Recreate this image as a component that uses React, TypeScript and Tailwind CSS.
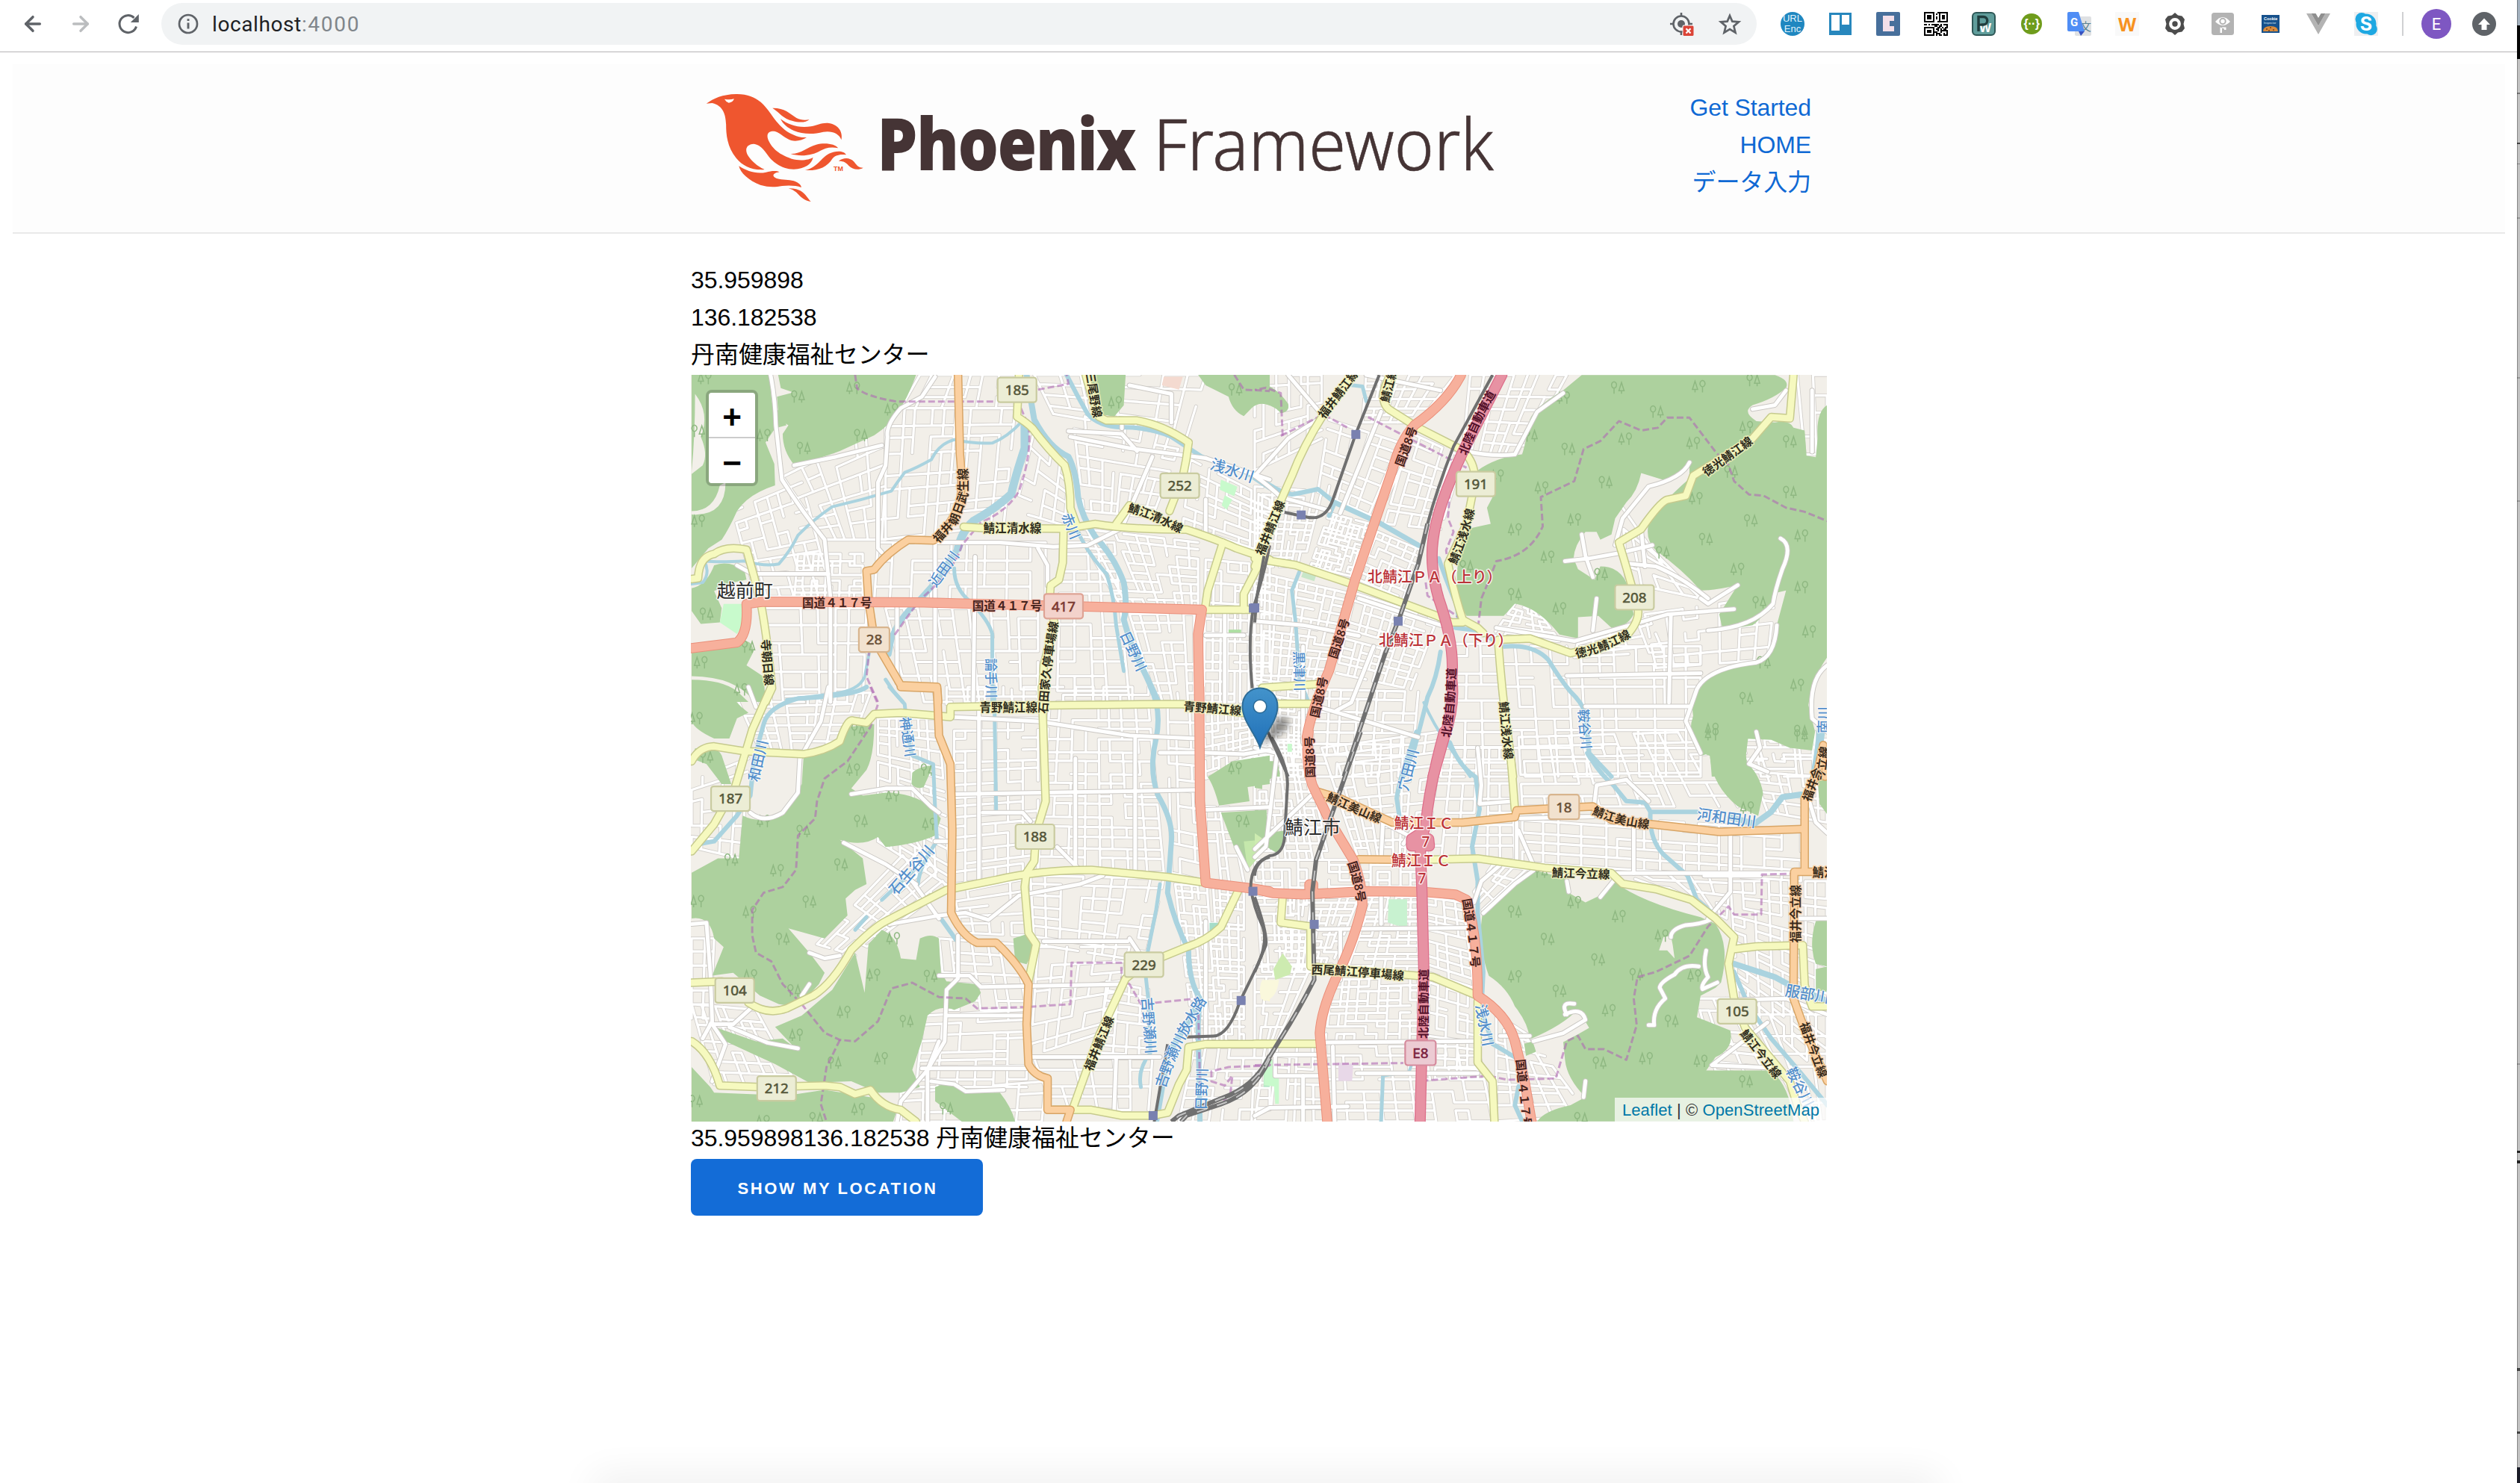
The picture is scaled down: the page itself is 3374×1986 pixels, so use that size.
import React from "react";
import { ArrowLeft, ArrowRight } from "lucide-react";

/* ---------- Map data: four sheets, each with its own local grid ---------- */

type Pt = [number, number];
type Label = { t: string; k: string; p: Pt[]; s?: number };
type Sheet = {
  ox: number; oy: number; sx: number; sy: number;
  grids: number[][];
  forest: string[];
  park: [string, string][];
  water: [string, number][];
  minor: string[];
  yellow: string[];
  orange: string[];
  trunk: string[];
  motorway: string[];
  rail: string[];
  mainRail: string[];
  admin: string[];
  stations: Pt[];
  trees: Pt[];
  labels: Label[];
  shields: { t: string; x: number; y: number; k: string }[];
};

const NW: Sheet = {
  ox: 900, oy: 340, sx: 0.510204, sy: 0.382653,
  grids: [
    [290, 780, 560, 600, 560, 1000, 400, 1000, 6, 6], [570, 540, 900, 540, 870, 950, 550, 1000, 9, 8],
    [160, 900, 340, 800, 420, 1200, 220, 1200, 6, 8], [540, 1010, 980, 1010, 980, 1220, 530, 1220, 9, 4],
    [240, 1240, 510, 1240, 500, 1568, 260, 1568, 6, 6], [560, 1240, 960, 1240, 960, 1568, 620, 1568, 9, 7],
    [1050, 560, 1340, 640, 1260, 920, 1080, 900, 8, 7], [1060, 960, 1380, 1010, 1380, 1240, 1180, 1240, 10, 8],
    [1200, 1260, 1370, 1260, 1370, 1568, 1270, 1568, 5, 9], [1360, 720, 1568, 860, 1568, 1050, 1340, 950, 8, 7],
    [1400, 1070, 1568, 1090, 1568, 1568, 1395, 1568, 9, 14], [1020, 1010, 1160, 1010, 1200, 1568, 1010, 1568, 4, 12],
    [650, 423, 900, 423, 900, 540, 600, 540, 6, 3], [950, 423, 1400, 423, 1350, 640, 1000, 560, 8, 4],
    [330, 1050, 500, 1050, 500, 1210, 320, 1210, 9, 7], [950, 620, 1040, 760, 1030, 950, 900, 900, 4, 5],
  ],
  forest: [
    "M51,423 L255,423 L262,520 L285,560 L300,600 L270,610 L245,660 L268,735 L270,810 Q200,840 170,900 Q150,960 130,1000 L95,1030 L51,1100Z",
    "M278,423 L640,423 Q620,500 590,560 Q570,600 530,635 L440,690 Q380,720 320,738 Q290,690 290,630 L305,600 L280,580 L275,500 L318,485 L285,470Z",
    "M1085,423 L1190,423 L1185,530 L1160,570 L1120,560Z",
    "M1380,423 L1568,423 L1568,530 Q1540,515 1520,540 L1500,568 Q1470,550 1460,500 L1400,460Z",
    "M51,1170 Q90,1160 110,1090 Q150,1070 190,1110 L195,1140 L160,1150 L110,1180 L130,1240 L125,1290 L75,1295 L51,1250Z",
    "M51,1390 L160,1375 Q205,1330 214,1390 L195,1440 L240,1480 L245,1568 L51,1568Z",
  ],
  park: [
    ["M135,1225 L185,1225 L190,1290 L170,1330 L125,1290Z", "#c8facc"],
    ["M1440,790 L1483,815 L1475,848 L1437,825Z", "#c8facc"],
    ["M1450,845 L1470,860 L1455,895 L1442,880Z", "#c8facc"],
    ["M1460,1315 L1493,1315 L1493,1328 L1460,1328Z", "#aedfa3"],
    ["M1290,430 L1340,430 L1330,475 L1285,460Z", "#f4dad0"],
    ["M51,1490 Q130,1490 170,1530 L200,1568 L215,1568 Q170,1480 51,1478Z", "#f2efe9"],
    ["M60,490 Q100,560 75,640 Q95,700 80,740 L51,770 L51,760 Q60,640 60,490Z", "#f2efe9"],
    ["M51,900 Q110,900 125,810 L140,800 Q140,920 51,912Z", "#f2efe9"],
  ],
  water: [
    ["M915,590 Q880,640 840,662 Q790,665 740,650 Q700,665 680,720 Q640,750 610,765 Q590,800 575,830 Q500,860 420,885 Q370,930 330,985 Q310,1040 280,1085 Q240,1095 190,1075 Q120,1080 85,1075 Q100,1120 80,1150 L51,1155", 4],
    ["M925,590 L925,680 Q900,780 890,840 Q850,890 790,935 Q760,970 750,1030", 11],
    ["M750,1030 L690,1150 L650,1210 Q590,1280 575,1350 L568,1400", 8],
    ["M518,1390 L505,1480 Q490,1530 420,1540 L300,1560", 4],
    ["M560,1490 L580,1530 L605,1568", 5],
    ["M930,423 L950,580 Q990,680 1040,710 Q1060,760 1065,850 Q1075,920 1110,990 Q1160,1060 1185,1150 Q1195,1230 1185,1280 L1205,1370 L1245,1480 L1275,1568", 8],
    ["M1060,960 Q1090,1050 1140,1120 Q1160,1200 1165,1300 L1185,1460", 5],
    ["M1035,423 Q1060,490 1090,560 Q1120,605 1180,607 Q1250,605 1310,640 L1390,710 L1500,760 L1568,820", 6],
    ["M740,1100 Q740,1170 780,1215 Q830,1280 840,1330 L840,1568", 5],
  ],
  minor: [
    "M258,423 Q270,500 272,600 L288,790 Q340,900 400,1000 L415,1200 L415,1568",
    "M690,430 L655,500 L600,540 Q560,600 565,640 L560,740 L540,800 L540,1030 L550,1045",
    "M700,1010 L860,1010 L1000,1025 L1090,1020 L1180,960 L1260,710",
    "M1045,640 L1200,680 L1400,715", "M1040,620 L1180,630 L1220,690", "M1180,583 L1180,610",
    "M690,1010 L690,1500", "M795,1060 L790,1568", "M1450,1250 V1568", "M1400,1335 H1500",
    "M960,1030 L985,1090 L985,1160", "M320,740 L430,710 L550,670", "M1200,460 L1310,490 L1310,590",
    "M170,1090 L210,1120 L410,1120", "M1400,715 L1568,790", "M1400,860 L1400,980", "M590,1230 L590,1500",
  ],
  yellow: [
    "M910,423 L905,570 Q930,590 945,610 Q990,690 1030,740 Q1045,800 1045,890 L1060,945",
    "M765,955 L820,960 L1030,962 L1110,945 Q1200,965 1350,965 Q1430,1000 1480,1030 L1568,1070",
    "M1027,962 L1025,1080 L1015,1140 L993,1160 L990,1220 L1003,1290 L975,1440 L970,1568",
    "M1165,945 L1200,880 L1230,905 Q1280,920 1320,960",
    "M1355,660 Q1350,720 1340,780 L1305,900",
    "M1085,423 Q1100,500 1120,570 L1140,583 L1220,583 Q1290,600 1355,660",
    "M51,1138 L68,1135 Q70,1060 110,1050 Q140,1020 195,1035 L215,1130 L235,1240 Q250,1350 262,1520 L245,1568",
    "M1445,1010 L1405,1180 L1398,1245 L1525,1245", "M1550,1060 L1500,1190 L1500,1245",
  ],
  orange: ["M750,423 L755,700 Q765,840 750,890 Q720,970 685,1003 L620,1000 Q560,1050 530,1105 L510,1110 L515,1210 L525,1300 L530,1350 L600,1510 L695,1515 L698,1568"],
  trunk: ["M51,1380 L170,1360 Q200,1330 195,1225 L240,1217 L660,1220 L1100,1235 L1390,1245 L1380,1330 L1383,1568"],
  motorway: [],
  rail: ["M1568,1020 Q1555,1110 1525,1240 Q1510,1350 1522,1520"],
  mainRail: [],
  admin: [
    "M480,423 L485,470 Q510,500 590,517 L850,517", "M960,475 L1040,455 L1035,423",
    "M915,540 L935,600 Q945,700 910,830 Q880,900 810,940 L760,1020 Q740,1110 650,1210 L580,1340",
    "M520,1350 L510,1480 L540,1568", "M1475,423 L1500,475 L1568,480",
  ],
  stations: [[1525, 1240]],
  trees: [[85, 435], [330, 500], [475, 470], [68, 620], [240, 635], [345, 680], [575, 545], [495, 635], [68, 935], [90, 1260], [75, 1430], [1478, 475], [1162, 520], [200, 1375], [180, 1525]],
  labels: [
    { t: "福井朝日武生線", k: "roadO", p: [[685, 1012], [740, 930], [762, 850], [762, 740]] },
    { t: "鯖江清水線", k: "road", p: [[800, 960], [985, 960]] },
    { t: "鯖江清水線", k: "road", p: [[1190, 885], [1265, 910], [1345, 970]] },
    { t: "国道４１７号", k: "roadT", p: [[320, 1222], [545, 1222]] },
    { t: "国道４１７号", k: "roadT", p: [[768, 1232], [990, 1232]] },
    { t: "石田家久停車場線", k: "road", p: [[972, 1620], [980, 1440], [1004, 1275]] },
    { t: "寺朝日線", k: "road", p: [[244, 1335], [256, 1525]] },
    { t: "三尾野線", k: "road", p: [[1096, 410], [1117, 575]] },
    { t: "越前町", k: "city", s: 25, p: [[98, 1178], [283, 1178]] },
    { t: "近田川", k: "river", s: 18, p: [[670, 1180], [755, 1025]] },
    { t: "赤川", k: "river", s: 18, p: [[1028, 890], [1065, 1015]] },
    { t: "浅水川", k: "river", s: 20, p: [[1395, 725], [1545, 790]] },
    { t: "日野川", k: "river", s: 19, p: [[1180, 1305], [1240, 1475]] },
    { t: "論手川", k: "river", s: 18, p: [[836, 1390], [838, 1580]] },
  ],
  shields: [
    { t: "185", x: 905, y: 476, k: "y" }, { t: "252", x: 1332, y: 811, k: "y" },
    { t: "417", x: 1027, y: 1233, k: "t" }, { t: "28", x: 530, y: 1350, k: "o" },
  ],
};

const NE: Sheet = {
  ox: 1680, oy: 480, sx: 0.497449, sy: 0.357143,
  grids: [
    [0, 62, 180, 62, 180, 300, 0, 420, 6, 7], [200, 230, 420, 330, 330, 600, 170, 500, 6, 7],
    [420, 280, 560, 370, 500, 640, 350, 620, 5, 8], [200, 580, 310, 620, 270, 820, 150, 780, 9, 12],
    [330, 650, 450, 720, 400, 900, 280, 830, 6, 6], [0, 800, 250, 880, 180, 1220, 0, 1220, 9, 12],
    [270, 880, 490, 980, 420, 1240, 220, 1180, 8, 9], [160, 1240, 440, 1250, 420, 1568, 150, 1568, 7, 8],
    [530, 1070, 650, 1070, 680, 1568, 500, 1568, 3, 9], [660, 1080, 1200, 1080, 1200, 1568, 690, 1568, 12, 9],
    [700, 920, 770, 960, 820, 1060, 640, 1040, 6, 6], [1050, 960, 1400, 890, 1380, 1130, 1080, 1160, 7, 5],
    [580, 62, 840, 62, 720, 370, 560, 350, 7, 7], [990, 560, 1070, 720, 1200, 900, 1000, 840, 4, 4],
    [0, 1200, 140, 1230, 130, 1568, 20, 1568, 8, 14], [1300, 1430, 1540, 1430, 1540, 1568, 1320, 1568, 6, 4],
    [1460, 62, 1540, 62, 1540, 360, 1480, 360, 2, 4], [0, 480, 180, 500, 130, 780, 0, 780, 8, 10],
    [300, 62, 540, 62, 440, 240, 290, 240, 6, 6], [870, 1060, 1060, 970, 1100, 1100, 860, 1120, 5, 4],
  ],
  forest: [
    "M880,62 L1400,62 Q1440,80 1430,110 Q1400,150 1340,175 Q1310,200 1350,235 L1400,240 Q1440,230 1450,260 L1480,270 L1485,365 L1510,370 L1515,300 Q1510,200 1541,175 L1541,1120 Q1500,1200 1490,1300 L1508,1400 L1500,1470 L1440,1460 L1390,1430 L1310,1425 L1320,1470 L1330,1568 L1230,1568 L1225,1480 L1200,1490 Q1160,1420 1180,1340 Q1170,1260 1210,1200 L1260,1160 L1350,1130 Q1400,1100 1405,1000 L1430,870 L1400,880 Q1380,960 1340,1000 L1260,1020 L1250,960 L1300,850 Q1240,870 1200,870 Q1150,790 1080,720 Q1050,680 1060,620 Q1080,560 1170,450 L1170,390 Q1160,430 1110,460 L1040,430 Q1030,500 1000,540 L970,600 L960,660 L930,680 L920,650 L890,650 Q860,700 858,750 L870,790 L915,830 L930,780 Q980,780 1000,840 L1020,960 Q1000,1010 960,1010 L925,965 L870,970 L870,1050 L820,1035 Q760,930 700,920 L670,965 L570,965 Q540,900 545,840 Q540,760 570,640 L635,620 L625,560 L640,520 L600,420 Q650,370 720,360 Q735,280 740,230 Q755,180 830,120 Z",
    "M0,90 Q50,90 90,170 Q95,200 70,205 Q50,170 0,165Z",
    "M0,1525 L60,1510 L68,1568 L0,1568Z",
  ],
  park: [["M130,800 L165,815 L160,835 L125,820Z", "#c8e6c8"], ["M88,1445 L100,1445 L100,1475 L88,1475Z", "#c8facc"]],
  water: [
    ["M215,540 L340,620 L440,700", 7], ["M15,450 Q60,500 100,510 Q140,500 170,490 L215,540 L200,590", 6],
    ["M260,100 L290,105 L300,160", 5],
    ["M495,750 Q520,850 545,930 L550,1000", 6], ["M500,1100 Q490,1200 465,1270 Q455,1330 430,1460 L400,1568", 6],
    ["M455,1290 Q480,1370 520,1450 L580,1568", 4],
    ["M540,1010 L600,1020 L670,1080 Q750,1070 790,1130 Q820,1200 850,1250 Q880,1290 890,1330 L900,1480 L960,1568", 6],
    ["M120,800 L100,870 L110,990 L120,1200 L145,1290", 5], ["M1525,1380 L1510,1568", 11],
  ],
  minor: [
    "M0,440 L90,300 L180,220", "M0,440 Q40,480 70,520 L200,570", "M560,345 Q640,370 700,360 L760,200 L830,130",
    "M650,1010 L860,1060 L1110,960 L1290,940", "M1220,900 Q1150,820 1080,780 L1010,770",
    "M835,760 L900,750 L980,730 L1070,700", "M1120,960 L1115,1290", "M1200,900 L1220,920 L1300,850",
    "M1415,675 Q1450,700 1420,790 Q1400,870 1395,920 Q1340,1010 1220,1020",
    "M1541,1150 Q1490,1200 1500,1350 L1540,1400", "M0,985 L130,1000 L280,1040",
    "M1170,390 Q1150,450 1060,480 L990,600 L970,700", "M880,660 L890,740 L910,820", "M1405,1000 Q1400,1120 1350,1140 Q1220,1160 1190,1240 L1160,1360 L1200,1480",
    "M320,1080 L260,1290 L220,1320", "M840,1190 L1200,1180", "M890,1305 H1170", "M340,200 L230,580",
    "M90,62 L180,210", "M280,900 L500,1000", "M1340,190 L1400,175 L1430,120", "M130,1080 L130,1440",
    "M1500,120 L1500,350", "M180,1310 L440,1420", "M1040,640 L1050,780", "M300,62 L500,120", "M920,900 L910,1020",
  ],
  yellow: [
    "M265,62 L185,210 Q130,330 100,440 Q60,560 0,780",
    "M365,62 Q330,150 360,190 L440,260 L560,345 Q600,400 590,480 L570,620 L520,770 Q540,900 560,980 L600,1010 L615,1030",
    "M0,750 L110,775 L260,845 L490,965 L530,990 L560,990",
    "M655,1055 L740,1050 L850,1105 L900,1090 L1000,1040 Q1040,980 1030,930 Q1000,780 980,690 L1040,640 Q1090,540 1110,530 L1160,515 L1180,440 L1340,300 L1390,220 L1440,225 L1450,62",
    "M655,1060 Q665,1250 680,1400 L695,1568", "M20,1235 L180,1220", "M60,1295 H160",
  ],
  orange: ["M1541,1470 L1535,1568"],
  trunk: ["M555,62 Q520,160 430,250 Q390,310 370,420 L270,830 L200,1170 Q150,1330 140,1420 L150,1568"],
  motorway: ["M665,62 L560,350 Q490,560 480,680 Q470,780 495,900 Q540,1080 530,1200 Q540,1300 510,1420 L480,1568"],
  rail: ["M335,62 L270,290 L210,530 Q190,610 140,595 L80,577", "M25,740 L5,900 L0,990", "M35,1400 L90,1568", "M640,62 L535,330 Q490,490 465,620"],
  mainRail: ["M465,620 L440,770 L390,970 L350,1110 L240,1568"],
  admin: [
    "M75,290 L70,130 L30,110 L0,118", "M70,290 L185,210 L250,260", "M305,220 L430,310 L570,410",
    "M525,500 L520,600 L535,650 L515,720 L520,770",
    "M460,840 L465,890 L600,1020 L610,900 Q640,800 650,760 Q740,740 775,630 L770,520 L860,460 L885,340 L930,310 L980,235 L1040,270 L1085,260 L1110,222 L1170,222 L1240,350 L1275,400 L1290,460 L1330,510 L1370,515 L1430,560 L1480,575 L1541,610",
  ],
  stations: [[272, 285], [125, 587], [386, 985], [0, 935]],
  trees: [[977, 110], [1195, 105], [1342, 82], [830, 148], [1082, 200], [1323, 258], [743, 290], [997, 302], [844, 340], [1180, 318], [1440, 312], [652, 440], [944, 465], [772, 485], [1440, 502], [1187, 525], [1282, 425], [860, 605], [1335, 608], [700, 642], [1214, 678], [1471, 665], [1098, 728], [788, 745], [570, 780], [1299, 790], [700, 885], [1471, 858], [932, 810], [820, 938], [1358, 915], [1492, 1025], [1370, 1140], [1460, 1225], [1323, 1275], [1230, 1390], [1470, 1398]],
  labels: [
    { t: "福井鯖江線", k: "road", p: [[180, 215], [270, 50]] },
    { t: "福井鯖江線", k: "road", p: [[8, 750], [75, 520]] },
    { t: "鯖江線", k: "road", p: [[348, 170], [375, 30]] },
    { t: "国道8号", k: "roadT", p: [[385, 415], [430, 245]] },
    { t: "国道8号", k: "roadT", p: [[205, 1140], [248, 960]] },
    { t: "国道8号", k: "roadT", p: [[155, 1375], [190, 1165]] },
    { t: "国道8号", k: "roadT", p: [[150, 1590], [147, 1400]] },
    { t: "北陸自動車道", k: "motor", p: [[555, 375], [590, 240], [645, 110]] },
    { t: "北陸自動車道", k: "motor", p: [[512, 1440], [528, 1300], [530, 1140]] },
    { t: "鯖江浅水線", k: "road", p: [[525, 785], [560, 690], [583, 545]] },
    { t: "鯖江浅水線", k: "road", p: [[668, 1270], [685, 1520]] },
    { t: "徳光鯖江線", k: "road", p: [[1195, 445], [1350, 290]] },
    { t: "徳光鯖江線", k: "road", p: [[850, 1110], [930, 1095], [1020, 1020]] },
    { t: "北鯖江ＰＡ（上り）", k: "red", s: 20, p: [[274, 818], [694, 818]] },
    { t: "北鯖江ＰＡ（下り）", k: "red", s: 20, p: [[304, 1057], [724, 1057]] },
    { t: "黒津川", k: "river", s: 18, p: [[118, 1075], [122, 1270]] },
    { t: "鞍谷川", k: "river", s: 18, p: [[882, 1290], [895, 1490]] },
    { t: "南川", k: "river", s: 18, p: [[1530, 1450], [1530, 1260]] },
    { t: "今立線", k: "roadO", p: [[1518, 1600], [1535, 1440]] },
  ],
  shields: [{ t: "191", x: 595, y: 471, k: "y" }, { t: "208", x: 1022, y: 896, k: "y" }],
};

const SW: Sheet = {
  ox: 900, oy: 920, sx: 0.510204, sy: 0.382653,
  grids: [
    [170, 40, 520, 20, 460, 230, 230, 220, 8, 6], [540, 110, 700, 110, 730, 700, 540, 540, 6, 14],
    [740, 110, 960, 110, 960, 650, 740, 690, 6, 15], [990, 70, 1250, 70, 1290, 650, 960, 640, 8, 15],
    [1300, 70, 1380, 70, 1400, 680, 1310, 650, 3, 12], [1395, 70, 1568, 70, 1568, 240, 1400, 320, 9, 9],
    [740, 720, 930, 670, 930, 870, 760, 860, 5, 5], [940, 660, 1290, 670, 1240, 960, 950, 900, 8, 7],
    [1320, 690, 1500, 710, 1500, 1240, 1370, 1240, 9, 22], [960, 910, 1200, 910, 1150, 1200, 940, 1290, 6, 7],
    [660, 1150, 930, 1130, 930, 1400, 640, 1400, 6, 8], [950, 1300, 1260, 1300, 1250, 1480, 1000, 1480, 6, 4],
    [700, 880, 900, 900, 930, 1130, 720, 1130, 5, 6], [51, 880, 110, 880, 100, 1160, 51, 1160, 2, 6],
    [51, 1110, 220, 1130, 330, 1400, 110, 1390, 6, 7], [380, 900, 640, 540, 720, 700, 480, 940, 8, 6],
    [1370, 1260, 1568, 1260, 1568, 1521, 1330, 1521, 6, 7], [51, 330, 200, 250, 180, 600, 51, 560, 4, 6],
    [600, 1420, 980, 1380, 970, 1521, 600, 1521, 6, 3], [980, 0, 1250, 0, 1250, 60, 980, 60, 7, 2],
    [720, 0, 960, 0, 960, 60, 720, 60, 5, 2], [1400, 420, 1460, 420, 1500, 680, 1400, 680, 3, 6],
    [1140, 1030, 1250, 1060, 1250, 1290, 1120, 1280, 4, 7],
  ],
  forest: [
    "M51,0 L140,0 Q160,50 200,90 L170,110 L150,180 L110,180 Q60,150 51,120Z",
    "M60,215 Q120,205 130,240 L155,340 L130,340 L90,270 L51,250Z",
    "M530,130 Q530,240 510,290 L470,355 L500,380 L560,370 Q630,370 680,420 L705,460 L690,520 Q640,550 560,560 L540,525 Q500,560 440,535 L500,600 L510,690 L480,710 L455,740 L460,800 L400,880 L305,845 L360,930 L400,1000 L385,1040 L330,1120 L280,1110 L230,1080 L160,1000 L105,1010 L135,910 L110,880 Q100,800 51,810 L51,650 L120,600 L175,600 L185,450 Q230,480 290,450 L340,340 L345,240 Q440,200 460,140Z",
    "M550,850 Q590,870 600,950 L640,955 L650,880 Q680,860 700,880 L705,1000 L720,1030 L800,1040 L810,1070 L795,1100 L740,1130 Q700,1110 670,1150 L655,1240 L630,1340 L650,1400 L600,1420 L540,1420 L470,1380 L360,1385 L270,1320 L140,1240 L110,1190 L220,1240 L290,1230 L320,1260 L270,1190 L340,1150 L420,1060 L480,930 L505,1070 L515,900Z",
    "M51,1330 L100,1400 L110,1420 L300,1430 L400,1410 L540,1440 L590,1480 L580,1521 L51,1521Z",
    "M690,1400 Q740,1370 790,1420 L860,1420 Q890,1470 900,1521 L760,1521 L690,1450Z",
    "M895,880 L930,865 L950,920 L930,970 L900,960Z",
    "M630,300 Q650,275 685,275 L660,350 Q640,360 628,340Z",
    "M1470,260 L1568,240 L1568,340 L1510,350 L1515,400 L1435,415 Q1420,340 1405,315Z",
    "M1440,440 L1560,430 L1560,560 L1510,640 L1480,580Z",
  ],
  park: [
    ["M1500,540 L1545,535 L1535,600 L1510,640Z", "#c5e8ac"], ["M1410,825 L1435,825 L1430,850 L1410,855Z", "#a5dcc8"],
    ["M1545,1035 L1568,1030 L1568,1100 L1545,1090Z", "#fdf9d2"], ["M1552,1330 L1568,1330 L1568,1400 L1552,1400Z", "#b5e8c8"],
  ],
  water: [
    ["M510,0 Q480,30 330,40 Q250,70 240,130 L215,250 L205,380 L170,450 L110,540 L75,548", 6],
    ["M570,0 L610,60 L620,180 L630,240 L685,270 L690,430 L695,540 Q650,620 645,690", 5],
    ["M635,640 L550,745", 5], ["M510,805 L480,850", 5], ["M705,810 L745,885", 6], ["M845,0 L850,430", 5],
    ["M1255,0 Q1285,80 1270,180 Q1250,290 1275,380 Q1315,470 1310,540 L1300,720 Q1320,830 1355,920 Q1355,1030 1385,1090 L1380,1180 L1385,1521", 7],
    ["M1280,690 L1270,780 L1240,980 L1250,1100 L1255,1280 Q1220,1340 1230,1400", 5],
    ["M1385,1100 L1300,1290 L1270,1521", 8],
  ],
  minor: [
    "M740,375 L1380,360", "M740,105 L960,120 L1200,170 L1375,180", "M805,70 V690", "M815,440 L920,440 L940,470",
    "M1215,180 V660", "M1058,250 V640", "M1010,560 L1070,640", "M570,830 L700,800 L770,790 L830,815 L910,730 L1070,690 L1130,660",
    "M630,680 L700,810", "M700,1010 L780,1010 L810,1050 L1180,1040", "M720,1150 H935", "M945,1295 H1280", "M655,1335 H930",
    "M750,870 L750,1020 L720,1060 L715,1240 L670,1340 L600,1450 L590,1521", "M51,830 L90,825 L100,1000 L105,1170 L80,1230",
    "M100,1180 L160,1180 L210,1120", "M105,1180 L140,1250 L105,1380", "M975,890 L1195,890", "M1400,430 L1568,420",
    "M470,375 L560,355 L630,355 L680,420 L700,440", "M205,440 Q240,480 290,440 L330,370 L335,250 L390,120 L410,0",
    "M200,0 L220,70", "M680,1380 L740,1390 L770,1415 L870,1410", "M360,930 L400,950 L440,940", "M1200,880 L1240,960",
    "M1280,230 L1400,230 L1500,235 L1568,220", "M670,1521 L670,1340 L700,1240", "M450,545 L560,620 L640,690", "M1165,1300 L1160,1480", "M360,1040 L340,1080",
    "M690,540 H725", "M1480,560 L1510,640", "M1400,820 V1230", "M150,1190 L250,1245 L330,1265",
  ],
  yellow: [
    "M51,260 Q70,210 110,208 L190,225 L345,235 Q400,225 440,190 Q460,110 475,118 L510,125 L530,95 L600,90 L690,100 L730,105 L730,70 L960,65 L1290,60 L1340,60 L1490,90 L1568,90",
    "M260,0 L210,150 L165,350 L110,480 L51,575",
    "M970,0 L980,400 L955,510 L950,610 L930,650 L925,700 L935,860 L955,900 L935,1030",
    "M51,1035 L130,1030", "M200,1105 Q250,1150 300,1125 L370,1080 Q420,1040 470,920 Q530,840 560,820 L720,710 L850,675 Q960,640 1100,640 L1300,665 L1400,685",
    "M1490,700 L1440,840 Q1400,890 1350,910 L1240,970 L1190,1020 L1120,1220 L1050,1480",
    "M51,1240 Q100,1280 125,1395 L230,1400 L400,1395 L440,1400 L480,1425 L520,1410 Q550,1470 600,1480 L640,1521",
    "M1000,1480 L1100,1480 L1180,1500 L1260,1500 L1300,1490 L1330,1390 L1350,1340 L1355,1260 L1400,1250 L1568,1250",
  ],
  orange: ["M600,0 L695,5 L700,170 L730,270 L735,500 L732,790 Q760,870 800,895 L850,895 Q910,970 935,1040 L930,1180 L935,1320 Q950,1360 985,1370 L985,1480 L1045,1480 L1035,1521"],
  trunk: ["M1383,0 L1385,400 L1400,685 L1520,705 L1568,715"],
  motorway: [],
  rail: ["M1568,595 Q1520,610 1518,700 Q1525,770 1550,840 Q1565,900 1530,990 L1490,1100 Q1460,1220 1420,1222 L1350,1225", "M1300,1250 L1265,1521"],
  mainRail: ["M1568,1290 Q1530,1400 1440,1440 L1330,1500 L1310,1521", "M1568,1300 Q1530,1420 1440,1460 L1350,1500 L1335,1521"],
  admin: [
    "M520,0 L540,60 L520,140 L460,260 L400,320 L380,400 L375,460 L330,520 L325,640 L290,700 L240,720 L210,780 L210,870 L220,930 L260,960 L290,1040 L340,1110 L400,1210 L440,1235 L480,1240 L540,1170 L575,1055 L630,1035 L700,1085 L770,1090 L800,1125 L930,1120 L1045,1110 L1048,965 L1178,965 L1180,1020 L1200,1040 L1230,1110 L1380,1090 L1385,1400",
    "M440,1235 L405,1330 L390,1460 L405,1521", "M1568,1325 L1460,1330 L1415,1345 L1415,1380 L1450,1395 L1470,1360 L1465,1420 L1440,1460",
  ],
  stations: [[1524, 715], [1493, 1097], [1262, 1500]],
  trees: [[62, 110], [90, 245], [475, 290], [488, 150], [578, 380], [495, 470], [674, 480], [344, 505], [240, 470], [155, 605], [275, 642], [443, 622], [66, 750], [360, 752], [203, 788], [290, 882], [205, 1010], [320, 1062], [528, 1008], [678, 1012], [450, 1138], [615, 1170], [325, 1218], [426, 1315], [548, 1300], [62, 1450], [488, 1478], [720, 1475], [238, 1520], [378, 1510], [1477, 285], [1497, 470], [580, 880], [670, 290]],
  labels: [
    { t: "青野鯖江線", k: "road", p: [[790, 70], [975, 70]] },
    { t: "青野鯖江線", k: "road", p: [[1325, 66], [1420, 74], [1510, 86]] },
    { t: "福井鯖江線", k: "road", p: [[1085, 1360], [1155, 1135]] },
    { t: "和田川", k: "river", s: 19, p: [[210, 345], [240, 170]] },
    { t: "神通川", k: "river", s: 18, p: [[608, 85], [628, 265]] },
    { t: "石生谷川", k: "river", s: 20, p: [[565, 735], [690, 545]] },
    { t: "吉野瀬川", k: "river", s: 19, p: [[1245, 1070], [1258, 1300]] },
    { t: "吉野瀬川放水路", k: "river", s: 19, p: [[1275, 1420], [1315, 1240], [1400, 1070]] },
    { t: "日野川", k: "river", s: 19, p: [[1387, 1495], [1391, 1320]] },
  ],
  shields: [
    { t: "187", x: 153, y: 391, k: "y" }, { t: "188", x: 952, y: 524, k: "y" }, { t: "104", x: 164, y: 1062, k: "y" },
    { t: "229", x: 1238, y: 972, k: "y" }, { t: "212", x: 274, y: 1405, k: "y" },
  ],
};

const SE: Sheet = {
  ox: 1680, oy: 980, sx: 0.497449, sy: 0.357143,
  grids: [
    [0, 30, 130, 30, 200, 480, 0, 480, 10, 14], [60, 620, 280, 620, 200, 900, 70, 900, 9, 12],
    [300, 620, 440, 620, 440, 900, 220, 900, 7, 12], [210, 930, 440, 920, 440, 1160, 190, 1160, 9, 9],
    [180, 60, 500, 0, 440, 480, 280, 480, 9, 11], [500, 60, 690, 60, 700, 480, 460, 480, 6, 9],
    [710, 20, 1180, 0, 1300, 280, 720, 280, 11, 6], [720, 300, 1470, 370, 1470, 560, 720, 490, 14, 5],
    [460, 620, 560, 640, 590, 960, 460, 900, 4, 9], [470, 940, 600, 1000, 600, 1300, 460, 1300, 5, 9],
    [190, 1180, 600, 1180, 640, 1461, 200, 1461, 9, 7], [1300, 0, 1540, 0, 1540, 340, 1380, 300, 6, 8],
    [1280, 560, 1540, 560, 1540, 1300, 1300, 1000, 8, 14], [1190, 1000, 1290, 1000, 1420, 1300, 1240, 1270, 4, 7],
    [1340, 1060, 1540, 1060, 1540, 1461, 1480, 1461, 4, 6], [0, 880, 150, 880, 60, 1160, 0, 1160, 5, 6],
    [30, 1160, 180, 1180, 190, 1461, 0, 1461, 5, 6], [650, 1060, 740, 1140, 900, 1440, 650, 1461, 5, 8],
    [590, 600, 640, 500, 760, 520, 620, 690, 4, 4], [200, 480, 440, 480, 440, 600, 200, 600, 9, 5], [0, 480, 140, 480, 140, 900, 20, 900, 6, 12],
    [980, 530, 1280, 530, 1270, 700, 1180, 630, 5, 4],
  ],
  forest: [
    "M755,520 L840,550 L840,600 L890,640 L950,600 L965,560 Q1040,640 1200,695 L1240,720 Q1280,800 1255,940 L1240,960 L1200,990 L1190,1070 L1280,1120 Q1290,1190 1240,1220 L1215,1270 L1390,1270 Q1440,1330 1450,1461 L760,1461 Q780,1420 850,1400 L890,1370 Q840,1300 835,1230 L830,1160 L740,1150 Q735,1090 700,1030 Q680,960 630,915 Q600,800 612,690 Q650,660 665,610 Q700,560 755,520Z",
    "M1180,0 L1330,0 L1320,110 Q1360,160 1368,230 L1355,315 L1300,280 Q1230,200 1225,90 L1205,80Z",
    "M1390,0 L1500,0 L1490,60 L1440,60Z", "M1541,120 L1515,180 L1520,270 L1541,310Z",
    "M1541,705 L1510,710 Q1490,800 1510,870 L1541,880Z", "M1541,880 L1510,890 L1510,970 L1541,975Z",
    "M0,110 L60,110 L68,160 L20,190 L20,215 L0,210Z", "M0,290 Q30,300 30,380 L80,370 Q85,430 60,455 L30,430 L0,450Z",
    "M725,1170 L750,1160 L757,1200 L730,1215Z",
  ],
  park: [
    ["M75,830 L100,880 L95,910 L55,930 L50,890Z", "#cdebb0"], ["M360,628 L410,628 L410,735 L380,725 L358,715Z", "#c8f2d0"],
    ["M25,1230 L48,1230 L48,1290 L65,1300 L65,1395 L55,1395 L52,1330 L25,1325Z", "#c8facc"],
    ["M225,1240 L265,1245 L262,1310 L225,1310Z", "#e8d8e8"], ["M20,930 L65,930 Q60,1000 25,1010 Q5,980 20,930Z", "#faf8dc"],
    ["M0,380 L20,400 L10,450 L0,450Z", "#cdebb0"],
    ["M1100,770 L1120,765 L1125,800 L1130,850 L1110,820 L1088,820Z", "#f2efe9"],
    ["M745,1150 Q830,1100 870,1040 L900,1110 Q840,1160 760,1210Z", "#f2efe9"],
  ],
  water: [
    ["M435,0 Q390,170 382,250 L395,370", 6], ["M525,40 Q550,130 595,170 L605,290 L585,430 L600,560 L600,680 L615,900 L610,1040 L640,1170 L700,1220", 6],
    ["M710,1330 L700,1400 L720,1461", 6], ["M895,80 Q930,160 965,200 L1000,260 L1050,265 L1065,300 L1190,300", 6],
    ["M1065,300 Q1060,400 1100,460 L1165,540 L1190,630 L1240,690", 6], ["M1470,235 L1420,245 L1390,300 L1345,345 L1280,320", 8],
    ["M1525,0 L1500,200", 9], ["M1290,870 L1400,920 L1440,950 L1541,1010", 8], ["M1290,900 L1330,1030 L1390,1150 L1470,1280 L1541,1400", 6],
    ["M345,1290 L340,1461", 5], ["M440,1180 L415,1275 L345,1290", 4],
  ],
  minor: [
    "M600,60 L610,200 L605,270 L700,260", "M715,325 L910,318 L920,200 L1000,180", "M975,530 H1455", "M1280,380 L1280,600 L1220,700",
    "M1240,690 Q1220,720 1160,725 Q1120,740 1120,770", "M1215,820 Q1205,880 1220,920 Q1200,950 1205,965 L1245,940",
    "M1195,880 Q1150,870 1130,910 Q1090,940 1090,960 L1105,1000 Q1070,1040 1075,1100 L1060,1100", "M190,1165 L600,1160",
    "M170,740 L580,735", "M230,740 L230,930", "M50,1210 L180,1210", "M0,1440 L40,1410 L250,1405", "M55,1210 L55,1290 L180,1290",
    "M130,1290 L130,1461", "M210,1180 L215,1461", "M275,1280 H600", "M840,1060 Q820,1010 860,1020 M835,1060 Q880,1030 890,1080 L830,1130 L750,1160",
    "M890,1310 L885,1370", "M590,640 L610,560 L660,500", "M615,680 L700,570 L750,520", "M840,560 L845,600 M930,620 L965,560",
    "M0,60 L60,80 L30,430 L0,470", "M150,240 L0,440", "M340,470 L345,340 L430,400", "M400,420 L440,340", "M705,340 L705,480",
    "M1300,1005 L1430,1000 L1541,1060", "M1350,0 L1360,60 L1330,120 L1380,150", "M1490,250 L1510,340 L1541,380", "M1000,180 L1060,260", "M1020,350 V530",
    "M340,600 V720", "M1450,700 H1541", "M1380,1090 L1230,1250 L1390,1260", "M660,1140 L740,1140", "M1360,540 L1210,540", "M710,370 L750,500",
  ],
  yellow: [
    "M680,0 L690,110 L700,290", "M440,480 L600,475 L780,510 L960,530 L990,570 L1080,590 L1175,630 L1240,700 L1290,770 L1275,870 L1290,1000 L1320,1110 L1440,1310 L1460,1400 L1480,1461",
    "M1290,815 L1350,805 L1475,800 L1480,950 L1500,1030 L1541,1030", "M75,620 L70,715 L150,730 L150,880 L270,895 L480,920 L600,990",
    "M600,1010 L600,1240 L640,1310 L645,1461", "M0,1170 H175",
  ],
  orange: [
    "M170,225 L230,250 L370,340 L560,340 L700,320 L705,295 L830,285 L910,280 L960,330 L1090,350 L1250,375 L1475,365",
    "M280,478 L440,480", "M1530,50 L1515,150 L1480,250 L1480,520", "M1455,525 H1541", "M1452,525 L1450,1000 Q1470,1080 1490,1150 L1541,1310",
  ],
  trunk: [
    "M145,0 Q135,110 155,200 L200,330 L265,480 Q290,570 290,650 Q270,770 230,890 Q180,1030 175,1130 L195,1461",
    "M0,590 L50,605 L130,610 L300,598 L450,600 L540,610 L570,630 Q600,760 600,990 Q680,1060 700,1160 L725,1300 L745,1461", "M147,572 L157,572 L157,588 L147,588Z",
  ],
  motorway: ["M510,0 Q470,200 460,350 L445,420 L450,600 L455,900 L445,1461", "M422,402 L440,386 L468,402 L470,428 L422,428Z"],
  rail: ["M45,20 Q90,130 88,200 L80,400 Q75,460 40,465 Q0,490 0,540", "M0,620 Q35,760 30,800 L0,900"],
  mainRail: ["M285,0 L215,280 L165,480 L155,600 L160,930 Q120,1040 70,1150 L0,1310"],
  admin: [
    "M0,1250 L400,1242", "M440,1250 L440,1310 L630,1290 L680,1305 L810,1300 L840,1160 L870,1140 L890,1190 L940,1190 L1000,1230 L1028,1100 L1020,1000 L1030,920 L1080,900 L1170,840 L1220,730 L1275,655 L1290,685 L1363,685 L1365,535 L1500,530",
  ],
  stations: [[160, 722]],
  trees: [[700, 675], [980, 692], [788, 778], [1095, 765], [924, 855], [700, 918], [1027, 910], [1183, 915], [820, 972], [953, 1045], [1122, 1085], [1053, 1225], [928, 1242], [1200, 1235], [1322, 1312], [1325, 285], [878, 1450], [860, 640], [770, 525], [1230, 10], [1470, 15]],
  labels: [
    { t: "国道8号", k: "roadT", p: [[258, 475], [280, 560], [288, 650]] },
    { t: "国道４１７号", k: "roadT", p: [[568, 610], [585, 740], [596, 900]] },
    { t: "国道４１７号", k: "roadT", p: [[714, 1215], [735, 1500]] },
    { t: "北陸自動車道", k: "motor", p: [[454, 1165], [455, 875]] },
    { t: "鯖江美山線", k: "roadO", p: [[185, 235], [350, 335]] },
    { t: "鯖江美山線", k: "roadO", p: [[900, 285], [970, 335], [1075, 350]] },
    { t: "鯖江今立線", k: "road", p: [[785, 527], [970, 535]] },
    { t: "鯖江今立線", k: "road", p: [[1305, 1105], [1420, 1310]] },
    { t: "福井今立線", k: "roadO", p: [[1456, 805], [1456, 560]] },
    { t: "福井今立線", k: "roadO", p: [[1475, 1080], [1500, 1180], [1535, 1305]] },
    { t: "福井今", k: "roadO", p: [[1480, 275], [1520, 120]] },
    { t: "鯖江線", k: "roadO", p: [[1495, 527], [1600, 527]] },
    { t: "西尾鯖江停車場線", k: "road", p: [[135, 890], [260, 895], [420, 918]] },
    { t: "鯖江市", k: "city", s: 25, p: [[58, 357], [253, 357]] },
    { t: "鯖江ＩＣ", k: "red", s: 20, p: [[350, 342], [560, 342]] },
    { t: "鯖江ＩＣ", k: "red", s: 20, p: [[340, 483], [555, 483]] },
    { t: "7", k: "red", s: 19, p: [[440, 412], [480, 412]] },
    { t: "7", k: "red", s: 19, p: [[430, 550], [470, 550]] },
    { t: "穴田川", k: "river", s: 19, p: [[395, 235], [430, 50]] },
    { t: "河和田川", k: "river", s: 20, p: [[1180, 305], [1360, 340]] },
    { t: "浅水川", k: "river", s: 19, p: [[605, 1000], [632, 1200]] },
    { t: "服部川", k: "river", s: 20, p: [[1415, 965], [1560, 1000]] },
    { t: "鞍谷川", k: "river", s: 19, p: [[1435, 1245], [1500, 1420]] },
  ],
  shields: [{ t: "18", x: 832, y: 282, k: "o" }, { t: "105", x: 1298, y: 1048, k: "y" }, { t: "E8", x: 446, y: 1204, k: "m" }],
};

const SHEETS = [NW, NE, SW, SE];

/* A street block: a quad crossed by two families of streets, some of them interrupted. */
function streetPath(s: Sheet): string {
  let out = "";
  s.grids.forEach((g, gi) => {
    const [ax, ay, bx, by, cx, cy, dx, dy, nx, ny] = g;
    const rnd = (i: number, j: number) => {
      const v = Math.sin(i * 127.1 + j * 311.7 + gi * 74.7 + s.ox) * 43758.5453;
      return v - Math.floor(v);
    };
    const at = (u: number, v: number) => {
      const x = (1 - v) * ((1 - u) * ax + u * bx) + v * ((1 - u) * dx + u * cx);
      const y = (1 - v) * ((1 - u) * ay + u * by) + v * ((1 - u) * dy + u * cy);
      return `${x.toFixed(1)},${y.toFixed(1)}`;
    };
    const us = Array.from({ length: nx + 1 }, (_, i) => (i + (rnd(i, 3) - 0.5) * 0.5 * (i > 0 && i < nx ? 1 : 0)) / nx);
    const vs = Array.from({ length: ny + 1 }, (_, j) => (j + (rnd(7, j) - 0.5) * 0.5 * (j > 0 && j < ny ? 1 : 0)) / ny);
    us.forEach((u, i) => {
      for (let j = 0; j < ny; j++) if (rnd(i + 11, j + 5) > 0.2) out += `M${at(u, vs[j])}L${at(u, vs[j + 1])}`;
    });
    vs.forEach((v, j) => {
      for (let i = 0; i < nx; i++) if (rnd(i + 31, j + 17) > 0.2) out += `M${at(us[i], v)}L${at(us[i + 1], v)}`;
    });
  });
  return out;
}

function Sheets({ children }: { children: (s: Sheet) => React.ReactNode }) {
  return (
    <>
      {SHEETS.map((s, i) => (
        <g key={i} transform={`translate(${s.ox} ${s.oy}) scale(${s.sx} ${s.sy})`} fill="none" strokeLinejoin="round">
          {children(s)}
        </g>
      ))}
    </>
  );
}

type LineProps = { d: string; stroke: string; w: number; dash?: string; cap?: "round" | "butt"; o?: number };
const Line = ({ d, stroke, w, dash, cap = "round", o }: LineProps) => (
  <path d={d} stroke={stroke} strokeWidth={w} strokeDasharray={dash} strokeLinecap={cap} opacity={o} vectorEffect="non-scaling-stroke" />
);

const ROADS: { key: "minor" | "yellow" | "orange" | "trunk" | "motorway"; casing: string; fill: string; w: number; c: number }[] = [
  { key: "minor", casing: "#cbc8c4", fill: "#ffffff", w: 5, c: 7 },
  { key: "yellow", casing: "#c6ca8e", fill: "#f6f9bf", w: 8.5, c: 11.5 },
  { key: "orange", casing: "#d8a566", fill: "#fbd0a0", w: 8.5, c: 11.5 },
  { key: "trunk", casing: "#ea8f7a", fill: "#f7b09c", w: 11.5, c: 13.5 },
  { key: "motorway", casing: "#dd6e8a", fill: "#e792a3", w: 12.5, c: 15 },
];

const LABELS: Record<string, { fill: string; halo: string; hw: number; fw: number }> = {
  road: { fill: "#2f2d20", halo: "#f3f1bd", hw: 3, fw: 600 },
  roadO: { fill: "#3a2c1c", halo: "#fbd0a0", hw: 3, fw: 600 },
  roadT: { fill: "#45221c", halo: "#f7b09c", hw: 2, fw: 600 },
  motor: { fill: "#54112a", halo: "#e792a3", hw: 1, fw: 600 },
  city: { fill: "#2b2b2b", halo: "#ffffff", hw: 3, fw: 400 },
  red: { fill: "#bb3238", halo: "#ffffff", hw: 3, fw: 500 },
  river: { fill: "#548fcb", halo: "#ffffff", hw: 2, fw: 500 },
};

const SHIELDS: Record<string, { fill: string; stroke: string; text: string }> = {
  y: { fill: "#ecedd5", stroke: "#c9cba0", text: "#55573a" },
  o: { fill: "#f2e2cf", stroke: "#d8b58e", text: "#6b5138" },
  t: { fill: "#f3d2cb", stroke: "#dea394", text: "#7c3a31" },
  m: { fill: "#eccbd3", stroke: "#d58b9d", text: "#7c2240" },
};

function MapCanvas() {
  return (
    <svg viewBox="925 502 1521 1000" className="block h-[1000px] w-[1521px]" fontFamily="'Noto Sans','Noto Sans CJK JP',sans-serif">
      <rect x="925" y="502" width="1521" height="1000" fill="#f2efe9" />
      <Sheets>{(s) => <Line d={streetPath(s)} stroke="#d3d0cc" w={5} />}</Sheets>
      <Sheets>{(s) => <Line d={streetPath(s)} stroke="#ffffff" w={3.2} />}</Sheets>
      <Sheets>{(s) => s.forest.map((d, i) => <path key={i} d={d} fill="#add19e" />)}</Sheets>
      <Sheets>{(s) => s.park.map(([d, c], i) => <path key={i} d={d} fill={c} />)}</Sheets>
      {SHEETS.map((s, i) =>
        s.trees.map(([x, y], j) => (
          <g key={`${i}-${j}`} transform={`translate(${s.ox + x * s.sx} ${s.oy + y * s.sy})`} stroke="#8fb882" strokeWidth="1.5" fill="none">
            {(i + j) % 2 ? (
              <path d="M-5 8V0M-5-8a3.4 4.200 0 1 0 .01 0M5 8V4M5-7L1.500 4H8.500Z" />
            ) : (
              <path d="M5 8V0M5-8a3.4 4.200 0 1 0 .01 0M-5 8V4M-5-7L-8.500 4H-1.500Z" />
            )}
          </g>
        ))
      )}
      <Sheets>{(s) => s.water.map(([d, w], i) => <Line key={i} d={d} stroke="#aad3df" w={w} />)}</Sheets>
      {ROADS.map((r) => (
        <React.Fragment key={r.key}>
          <Sheets>{(s) => s[r.key].map((d, i) => <Line key={i} d={d} stroke={r.casing} w={r.c} />)}</Sheets>
          <Sheets>{(s) => s[r.key].map((d, i) => <Line key={i} d={d} stroke={r.fill} w={r.w} />)}</Sheets>
          {r.key === "minor" && (
            <Sheets>{(s) => s.admin.map((d, i) => <Line key={i} d={d} stroke="#b06ab4" w={3} dash="9 4" cap="butt" o={0.6} />)}</Sheets>
          )}
        </React.Fragment>
      ))}
      <Sheets>{(s) => s.rail.map((d, i) => <Line key={i} d={d} stroke="#6f6f6f" w={4} cap="butt" />)}</Sheets>
      <Sheets>{(s) => s.mainRail.map((d, i) => <Line key={i} d={d} stroke="#707070" w={6} cap="butt" />)}</Sheets>
      <Sheets>{(s) => s.mainRail.map((d, i) => <Line key={i} d={d} stroke="#c4c4c4" w={2} dash="14 14" cap="butt" />)}</Sheets>
      {SHEETS.map((s, i) =>
        s.stations.map(([x, y], j) => (
          <rect key={`${i}-${j}`} x={s.ox + x * s.sx - 6} y={s.oy + y * s.sy - 6} width="12" height="12" fill="#7981b0" />
        ))
      )}
      {SHEETS.map((s, i) =>
        s.labels.map((l, j) => {
          const k = LABELS[l.k];
          const pts = l.p.map(([x, y]) => [(s.ox + x * s.sx).toFixed(1), (s.oy + y * s.sy).toFixed(1)].join(","));
          const d = pts.length === 3 ? `M${pts[0]} Q${pts[1]} ${pts[2]}` : `M${pts.join("L")}`;
          const id = `label-${i}-${j}`;
          return (
            <g key={id}>
              <path id={id} d={d} fill="none" />
              <text fontSize={l.s ?? 15.6} fontWeight={k.fw} dy="0.37em" textAnchor="middle" fill={k.fill} stroke={k.halo} strokeWidth={k.hw} strokeOpacity="0.8" paintOrder="stroke" strokeLinejoin="round">
                <textPath href={`#${id}`} startOffset="50%">{l.t}</textPath>
              </text>
            </g>
          );
        })
      )}
      {SHEETS.map((s, i) =>
        s.shields.map((h) => {
          const k = SHIELDS[h.k];
          const w = h.t.length === 3 ? 52 : 41;
          const x = s.ox + h.x * s.sx;
          const y = s.oy + h.y * s.sy;
          return (
            <g key={`${i}-${h.t}`}>
              <rect x={x - w / 2} y={y - 16.5} width={w} height="33" rx="3.5" fill={k.fill} stroke={k.stroke} strokeWidth="2.2" />
              <text x={x} y={y + 6.8} fontSize="18.8" textAnchor="middle" fill={k.text} stroke={k.text} strokeWidth="0.6">{h.t}</text>
            </g>
          );
        })
      )}
    </svg>
  );
}

function Marker() {
  return (
    <svg viewBox="0 0 90 84" className="absolute left-[737px] top-[418px] h-[84px] w-[90px]">
      <defs>
        <linearGradient id="pin" x1="0" y1="0" x2="0" y2="1">
          <stop offset="0" stopColor="#4393cb" />
          <stop offset="1" stopColor="#2070b8" />
        </linearGradient>
        <filter id="soft" x="-40%" y="-40%" width="180%" height="180%"><feGaussianBlur stdDeviation="4" /></filter>
      </defs>
      <path d="M25 80L42 48Q52 36 62 42Q68 52 52 64Z" fill="#000" opacity="0.4" filter="url(#soft)" />
      <path d="M25 81C19 62 1.500 46 1.500 26C1.500 11 12 1.500 25 1.500S48.500 11 48.500 26C48.500 46 31 62 25 81Z" fill="url(#pin)" stroke="#2e6c97" strokeWidth="2" />
      <circle cx="25" cy="26" r="8.800" fill="#fff" stroke="#2e6c97" strokeWidth="1.600" />
    </svg>
  );
}

/* ---------- Browser chrome ---------- */

function Ext({ children }: { children: React.ReactNode }) {
  return <span className="flex h-8 w-8 shrink-0 items-center justify-center">{children}</span>;
}

const QR = [
  "1111111001111111", "1000001010100001", "1011101000101101", "1011101010101101", "1011101010101101", "1000001000100001", "1111111001111111",
  "0000000000000000", "1101011111010111", "0000000110110001", "1111111001101011", "1000001011010110", "1011101001011111", "1011101110010001", "1000001011100101", "1111111010110111",
];

function Toolbar() {
  return (
    <div className="relative flex h-[70px] w-[3370px] items-start border-b border-[#b6b4b6] bg-white">
      <div className="ml-[28px] flex h-16 w-[188px] items-center gap-[32px]">
        <ArrowLeft className="h-9 w-8 text-[#5f6368]" strokeWidth={2.6} />
        <ArrowRight className="h-9 w-8 text-[#bbbdbf]" strokeWidth={2.6} />
        <svg viewBox="0 0 32 32" className="h-8 w-8">
          <path d="M26.500 19.500A11.500 11.500 0 1 1 23.500 7.800" fill="none" stroke="#5f6368" strokeWidth="3" />
          <path d="M29.800 3V14H18.800Z" fill="#5f6368" />
        </svg>
      </div>
      <div className="mt-1 flex h-14 w-[2136px] items-center rounded-full bg-[#f1f3f4]">
        <svg viewBox="0 0 28 28" className="ml-[22px] h-7 w-7">
          <circle cx="14" cy="14" r="12" fill="none" stroke="#5f6368" strokeWidth="2.700" />
          <path d="M14 12.500V20.500M14 7.200V10" stroke="#5f6368" strokeWidth="2.900" />
        </svg>
        <span className="ml-[18px] mt-[2px] font-[Roboto,sans-serif] text-[28px] leading-8 tracking-[0.6px] text-[#202124]">localhost<span className="tracking-[1.7px] text-[#80868b]">:4000</span></span>
        <div className="ml-auto mr-[20px] flex items-center gap-[32px]">
          <svg viewBox="0 0 32 32" className="h-8 w-8">
            <circle cx="15" cy="16" r="10.500" fill="none" stroke="#5f6368" strokeWidth="2.600" />
            <path d="M15 1V6M15 26V31M0 16H5M25 16H30" stroke="#5f6368" strokeWidth="2.600" />
            <circle cx="15" cy="16" r="5" fill="#5f6368" />
            <rect x="16.500" y="17.500" width="15" height="15" rx="2" fill="#f1f3f4" />
            <rect x="17.500" y="18.500" width="14" height="13.500" rx="1.500" fill="#db4437" />
            <path d="M21.500 22.200L27.500 28.500M27.500 22.200L21.500 28.500" stroke="#fff" strokeWidth="2.200" />
          </svg>
          <svg viewBox="0 0 32 32" className="h-8 w-8">
            <path d="M16 5L19.300 12.600L28 13.300L21.400 19L23.500 27.600L16 23L8.500 27.600L10.600 19L4 13.300L12.700 12.600Z" fill="none" stroke="#5f6368" strokeWidth="2.700" />
          </svg>
        </div>
      </div>
      <div className="ml-[32px] flex h-16 items-center gap-[32px]">
        <Ext>
          <span className="flex h-8 w-8 flex-col items-center justify-center overflow-hidden rounded-full bg-[#1f87c0] font-[Liberation_Sans,sans-serif] text-[13px] leading-[14px] text-[#e3f3fb]"><span>URL</span><span>Enc</span></span>
        </Ext>
        <Ext>
          <span className="flex h-[30px] w-[30px] items-start gap-[3px] bg-[#2787bd] p-[3px]"><i className="h-[21px] w-[10.500px] bg-white" /><i className="h-[13px] w-[10.500px] bg-white" /></span>
        </Ext>
        <Ext>
          <svg viewBox="0 0 32 32" className="h-8 w-8"><rect width="32" height="32" rx="2" fill="#476f9b" /><path d="M9 5H24V12H18V19H24V26H9Z" fill="#f3dfe9" /></svg>
        </Ext>
        <Ext>
          <svg viewBox="0 0 16 16" className="h-8 w-8" shapeRendering="crispEdges">
            {QR.map((r, y) => r.split("").map((c, x) => (c === "1" ? <rect key={`${x}-${y}`} x={x} y={y} width="1" height="1" fill="#000" /> : null)))}
          </svg>
        </Ext>
        <Ext>
          <svg viewBox="0 0 32 32" className="h-8 w-8" fontFamily="'Liberation Sans',sans-serif" fontWeight="700">
            <rect x="1" y="1" width="30" height="30" rx="5" fill="#5f9d9b" stroke="#2d5756" strokeWidth="2" />
            <text x="10" y="27" fontSize="17" fill="#fff">W</text>
            <path d="M9 26V6.500H15.500A5 5 0 0 1 15.500 17H9" fill="none" stroke="#1f3d3d" strokeWidth="3.400" />
          </svg>
        </Ext>
        <Ext>
          <span className="flex h-7 w-7 items-center justify-center rounded-full bg-[#6f9c1c] font-[Liberation_Sans,sans-serif] text-[16px] font-bold leading-none tracking-[-0.5px] text-white">{"{··}"}</span>
        </Ext>
        <Ext>
          <svg viewBox="0 0 32 32" className="h-8 w-8" fontFamily="'Roboto','Noto Sans CJK JP',sans-serif">
            <rect x="10" y="6" width="22" height="26" rx="2" fill="#dfe1e3" />
            <text x="17" y="25" fontSize="15" fill="#5a8291">文</text>
            <path d="M15 26H23L18 32Z" fill="#3752c0" />
            <path d="M2 0H15L23 26H2Q0 26 0 24V2Q0 0 2 0Z" fill="#4f8df5" />
            <text x="4" y="18.500" fontSize="15" fontWeight="700" fill="#fff">G</text>
          </svg>
        </Ext>
        <Ext>
          <span className="flex h-8 w-8 items-center justify-center bg-[#f9f9f9] font-[Open_Sans,sans-serif] text-[25px] font-bold leading-none text-[#f7921f]">W</span>
        </Ext>
        <Ext>
          <svg viewBox="0 0 32 32" className="h-8 w-8">
            <path d="M16 1L20 4.500L25.500 5.500L29 10L27.500 16L29 22L25.500 26.500L20 27.500L16 31L12 27.500L6.500 26.500L3 22L4.500 16L3 10L6.500 5.500L12 4.500Z" fill="#4c4c4c" />
            <circle cx="16" cy="16" r="5.800" fill="none" stroke="#fff" strokeWidth="4.200" />
          </svg>
        </Ext>
        <Ext>
          <svg viewBox="0 0 30 30" className="h-[30px] w-[30px]">
            <rect width="30" height="30" rx="3.500" fill="#b3b3b3" />
            <path d="M5 12Q15 0 25 12Q15 22 5 12Z" fill="#fff" /><circle cx="15" cy="11.500" r="3.700" fill="#fff" stroke="#b3b3b3" strokeWidth="2" />
            <path d="M11.500 19.500H19.500V23H17V21.500M11.500 19.500V27H14V19.500" fill="#fff" />
          </svg>
        </Ext>
        <Ext>
          <svg viewBox="0 0 24 24" className="h-6 w-6" fontFamily="'Liberation Sans',sans-serif">
            <rect width="24" height="24" fill="#16518c" />
            <text x="3" y="7" fontSize="5.500" fontWeight="700" fill="#fff">Cookie</text><text x="3" y="12" fontSize="4" fill="#dfe9f3">Inspector</text>
            <path d="M2 22Q2 15 12 15T22 22Z" fill="#d98b3c" /><path d="M6 19h2M11 17h2M15 20h2M9 21h2" stroke="#7a431a" strokeWidth="1.500" />
          </svg>
        </Ext>
        <Ext>
          <svg viewBox="0 0 32 32" className="h-8 w-8"><path d="M0 2H6.500L16 18.500L25.500 2H32L16 30Z" fill="#b3b3b3" /><path d="M6.500 2H12.500L16 8L19.500 2H25.500L16 18.500Z" fill="#8f8f8f" /></svg>
        </Ext>
        <Ext>
          <svg viewBox="0 0 32 32" className="h-8 w-8" fontFamily="'Inter',sans-serif">
            <rect width="32" height="32" fill="#eeeff1" /><circle cx="16" cy="16" r="13.500" fill="#1ea8e2" /><circle cx="10" cy="9.500" r="8.500" fill="#1ea8e2" /><circle cx="22.500" cy="23" r="8.300" fill="#1ea8e2" />
            <text x="16" y="25" fontSize="25" fontWeight="700" textAnchor="middle" fill="#fff">S</text>
          </svg>
        </Ext>
      </div>
      <div className="ml-[32px] mt-4 h-8 w-[2px] bg-[#d0d1d3]" />
      <span className="ml-[24px] mt-3 flex h-10 w-10 items-center justify-center rounded-full bg-[#7e57c2] font-[Roboto,sans-serif] text-[22px] text-white">E</span>
      <svg viewBox="0 0 32 32" className="ml-[28px] mt-4 h-8 w-8">
        <circle cx="16" cy="16" r="16" fill="#5f6368" />
        <path d="M16 8.500L24 17H19.500V24H12.500V17H8Z" fill="#fff" />
      </svg>
    </div>
  );
}

/* ---------- Page ---------- */

function Logo() {
  return (
    <svg viewBox="940 110 1070 170" className="h-[170px] w-[1070px]">
      <g transform="translate(920 100) scale(0.714286 0.333333)" fill="#ef562f">
        <path d="M36,116 C50,95 66,79 92,78 C122,77 138,105 150,138 C162,170 175,222 200,242 C207,250 215,253 224,252 C215,264 205,269 195,264 C185,258 175,235 165,228 C152,224 148,240 152,262 C158,290 168,318 196,338 C212,348 230,342 236,332 C234,360 220,378 200,380 C175,380 158,345 150,320 C143,298 135,280 125,278 C110,280 108,302 114,325 C121,350 135,372 145,381 C125,385 105,370 92,335 C75,290 73,240 73,200 C72,160 68,125 47,114 Z" />
        <path d="M70,98 Q80,102 88,97 Q86,112 78,113 Q73,110 70,98Z" fill="#fff" />
        <path d="M160,134 C182,133 192,155 205,174 C213,183 222,184 229,180 C224,192 210,194 198,186 C180,178 172,150 160,134Z" />
        <path d="M175,178 C190,202 210,216 232,208 C245,203 252,192 266,195 C286,202 292,235 289,262 C285,235 270,224 255,230 C235,242 215,238 200,225 C188,213 180,200 175,178Z" />
        <path d="M194,318 C215,318 225,290 242,281 C258,272 278,278 283,295 C268,288 258,296 250,305 C235,325 212,330 194,318Z" />
        <path d="M221,384 C245,372 250,335 266,317 C280,303 295,306 298,322 C285,318 277,325 272,338 C262,372 245,387 221,384Z" />
        <path d="M284,347 C293,332 305,332 313,350 C318,365 322,374 330,374 C322,384 310,382 303,366 C298,352 292,346 284,347Z" />
        <path d="M97,367 C112,388 130,400 148,392 C158,386 168,385 173,391 C160,396 158,408 168,417 C180,425 190,420 200,427 C210,435 214,445 214,453 C205,445 190,444 178,447 C165,453 150,452 140,445 C116,428 100,395 97,367Z" />
        <path d="M190,457 C207,456 215,467 222,484 C227,497 229,505 232,510 C222,508 214,494 208,480 C203,468 198,462 190,457Z" />
      </g>
      <text x="1116" y="229" fontSize="9" fontWeight="700" fill="#ef562f" fontFamily="'Liberation Sans',sans-serif">TM</text>
      <text x="1175" y="227" fontSize="94" fontWeight="800" fill="#453435" stroke="#453435" strokeWidth="2" fontFamily="'Noto Sans','Open Sans',sans-serif" textLength="345" lengthAdjust="spacingAndGlyphs">Phoenix</text>
      <text x="1544" y="227.500" fontSize="96" fontWeight="300" fill="#453435" stroke="#453435" strokeWidth="0.600" fontFamily="'Noto Sans','Open Sans',sans-serif" textLength="456" lengthAdjust="spacingAndGlyphs">Framework</text>
    </svg>
  );
}

const STRIP: [number, number, string][] = [
  [0, 34, "#a3b1be"], [34, 45, "#050505"], [124, 2, "#777777"], [191, 2, "#444444"], [219, 1, "#888888"], [291, 2, "#999999"], [505, 2, "#999999"],
  [670, 2, "#999999"], [1424, 2, "#999999"], [1541, 3, "#222222"], [1554, 4, "#222222"], [1832, 4, "#444444"], [1917, 3, "#444444"], [1965, 21, "#1a1c28"],
];

export default function App() {
  return (
    <div className="relative h-[1986px] w-[3374px] overflow-hidden bg-white font-['Liberation_Sans','Noto_Sans_CJK_JP',sans-serif] text-black">
      <Toolbar />
      <header className="mx-[17px] mt-4 h-[227px] w-[3337px] border-b-2 border-[#e9e9e9] bg-[#fdfdfd]">
        <div className="ml-[908px] flex w-[1521px] justify-between">
          <div className="ml-[15px] mt-6"><Logo /></div>
          <nav className="mr-[21px] mt-[33px] flex flex-col items-end text-[32px] tracking-[-0.1px] text-[#0f69d4]">
            <a className="h-[50px] leading-[50px]">Get Started</a>
            <a className="h-[50px] leading-[50px]">HOME</a>
            <a className="h-[50px] leading-[50px]">データ入力</a>
          </nav>
        </div>
      </header>
      <main className="ml-[925px] mt-[37px] w-[1521px] text-[32px] tracking-[-0.05px]">
        <p className="h-[50px] leading-[50px]">35.959898</p>
        <p className="h-[50px] leading-[50px]">136.182538</p>
        <p className="h-[52px] leading-[50px]">丹南健康福祉センター</p>
        <div className="relative h-[1000px] w-[1521px] overflow-hidden">
          <MapCanvas />
          <Marker />
          <div className="absolute left-5 top-5 flex flex-col rounded-[8px] border-4 border-black/20 bg-clip-padding font-bold">
            <button className="flex h-[61px] w-[62px] items-center justify-center rounded-t-[4px] border-b-2 border-[#ccc] bg-white pt-[7px] text-[44px] leading-none">+</button>
            <button className="flex h-[60px] w-[62px] items-center justify-center rounded-b-[4px] bg-white pt-[5px] text-[44px] leading-none">−</button>
          </div>
          <div className="absolute bottom-0 right-0 flex h-8 w-[284px] items-center justify-center whitespace-pre bg-white/70 text-[22px] tracking-[0.1px] text-[#333]">
            <a className="text-[#0078a8]">Leaflet</a> | © <a className="text-[#0078a8]">OpenStreetMap</a>
          </div>
        </div>
        <p className="mt-[-3px] h-[53px] leading-[50px]">35.959898136.182538 丹南健康福祉センター</p>
        <button className="flex h-[76px] w-[391px] items-center justify-center rounded-[8px] bg-[#136cd7] pl-[2px] pt-[3px] text-[22px] font-bold tracking-[2.6px] text-white">SHOW MY LOCATION</button>
      </main>
      <div className="absolute bottom-[-20px] left-[800px] h-5 w-[1790px] rounded-full shadow-[0_0_50px_10px_rgba(0,0,0,0.07)]" />
      <div className="absolute right-0 top-0 h-[1986px] w-1 bg-[#c2c2c2]">
        {STRIP.map(([y, h, c]) => (
          <div key={y} className="absolute left-0 w-1" style={{ top: y, height: h, backgroundColor: c }} />
        ))}
        <div className="absolute left-0 top-0 h-full w-px bg-black/30" />
      </div>
    </div>
  );
}
